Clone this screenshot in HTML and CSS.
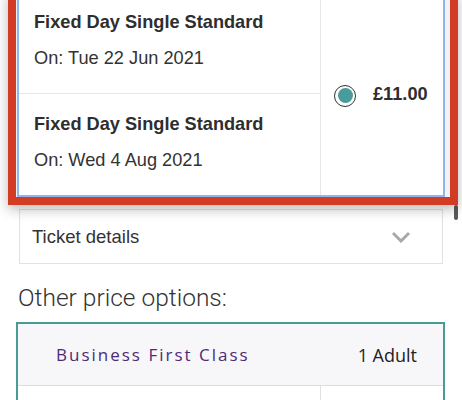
FILE: index.html
```html
<!DOCTYPE html>
<html lang="en">
<head>
<meta charset="utf-8">
<title>Ticket options</title>
<link rel="stylesheet" href="styles.css">
</head>
<body>
  <div class="focus-ring">
    <div class="fare-card">
      <div class="fare-list">
        <div class="fare-row">
          <div class="fare-name">Fixed Day Single Standard</div>
          <div class="fare-date">On: Tue 22 Jun 2021</div>
        </div>
        <div class="fare-row">
          <div class="fare-name">Fixed Day Single Standard</div>
          <div class="fare-date">On: Wed 4 Aug 2021</div>
        </div>
      </div>
      <div class="fare-price">
        <span class="radio"><span class="radio-dot"></span></span>
        <span class="price">£11.00</span>
      </div>
    </div>
  </div>

  <div class="details">
    <span>Ticket details</span>
    <svg class="chevron" width="20" height="12" viewBox="0 0 20 12" aria-hidden="true">
      <path d="M2 2 L10 10 L18 2" fill="none" stroke="#a9a9a9" stroke-width="3"/>
    </svg>
  </div>

  <h2 class="other-title">Other price options:</h2>

  <div class="option-card">
    <div class="option-head">
      <span class="option-class">Business First Class</span>
      <span class="option-pax">1 Adult</span>
    </div>
    <div class="option-body">
      <div class="option-left"></div>
      <div class="option-right"></div>
    </div>
  </div>

  <div class="scroll-thumb"></div>
</body>
</html>
```

FILE: styles.css
```css
html, body {
  margin: 0;
  padding: 0;
  background: #fff;
}

body {
  font-family: "Liberation Sans", Arial, sans-serif;
  color: #333;
  overflow: hidden;
}

.focus-ring {
  margin: -8px 4px 0 8px;
  border: 8px solid #d23c24;
  border-top: 0;
  padding: 0 5px 0 1px;
  background: #f3f3f3;
  box-shadow: 0 4px 12px rgba(0, 0, 0, 0.28);
  position: relative;
  z-index: 1;
}

.fare-card {
  display: flex;
  background: #fff;
  border: 2px solid #8fb4ef;
  border-top: 0;
}

.fare-list {
  width: 302px;
  box-sizing: border-box;
  border-right: 1px solid #e6e6e6;
}

.fare-row {
  padding: 19px 15px 24px;
}

.fare-row + .fare-row {
  border-top: 1px solid #e6e6e6;
}

.fare-name {
  font-weight: 700;
  font-size: 18.2px;
  line-height: 22px;
  color: #2e2e2e;
}

.fare-date {
  margin-top: 14px;
  font-size: 18.2px;
  line-height: 22px;
  color: #333;
}

.fare-price {
  flex: 1;
  display: flex;
  align-items: center;
  padding-left: 13px;
  gap: 17px;
}

.radio {
  width: 22px;
  height: 22px;
  box-sizing: border-box;
  border: 1.5px solid #333;
  border-radius: 50%;
  display: flex;
  align-items: center;
  justify-content: center;
  margin-top: 4px;
  background: #fff;
}

.radio-dot {
  width: 15px;
  height: 15px;
  border-radius: 50%;
  background: #4a9b9b;
}

.price {
  font-weight: 700;
  font-size: 18.2px;
  line-height: 22px;
  color: #2e2e2e;
}

.details {
  margin: 4px 19px 0 19px;
  height: 55px;
  box-sizing: border-box;
  border: 1px solid #e2e2e2;
  display: flex;
  align-items: center;
  justify-content: space-between;
  padding: 0 31px 0 12px;
  font-size: 18.5px;
  line-height: 22px;
  color: #333;
}

.chevron {
  display: block;
}

.other-title {
  margin: 19px 0 9px 18px;
  font-family: Roboto, "Liberation Sans", sans-serif;
  font-weight: 300;
  font-size: 24.5px;
  line-height: 30px;
  color: #333;
}

.option-card {
  margin: 0 17px 0 16px;
  border: 2px solid #4a9b97;
  border-bottom: 0;
}

.option-head {
  height: 61px;
  background: #f7f7fa;
  display: flex;
  align-items: center;
  justify-content: space-between;
  padding: 0 26px 0 38px;
  border-bottom: 1px solid #dedede;
}

.option-class {
  font-family: "Open Sans", "Liberation Sans", sans-serif;
  font-size: 17px;
  letter-spacing: 2px;
  color: #4e2a74;
}

.option-pax {
  font-family: "Open Sans", "Liberation Sans", sans-serif;
  font-size: 18px;
  color: #222;
}

.option-body {
  display: flex;
  height: 60px;
  background: #fff;
}

.option-left {
  width: 303px;
  box-sizing: border-box;
  border-right: 1px solid #e0e0e0;
}

.option-right {
  flex: 1;
}

.scroll-thumb {
  position: absolute;
  left: 454px;
  top: 205px;
  width: 3.5px;
  height: 15px;
  border-radius: 2px;
  background: #5a5a5a;
}
```
